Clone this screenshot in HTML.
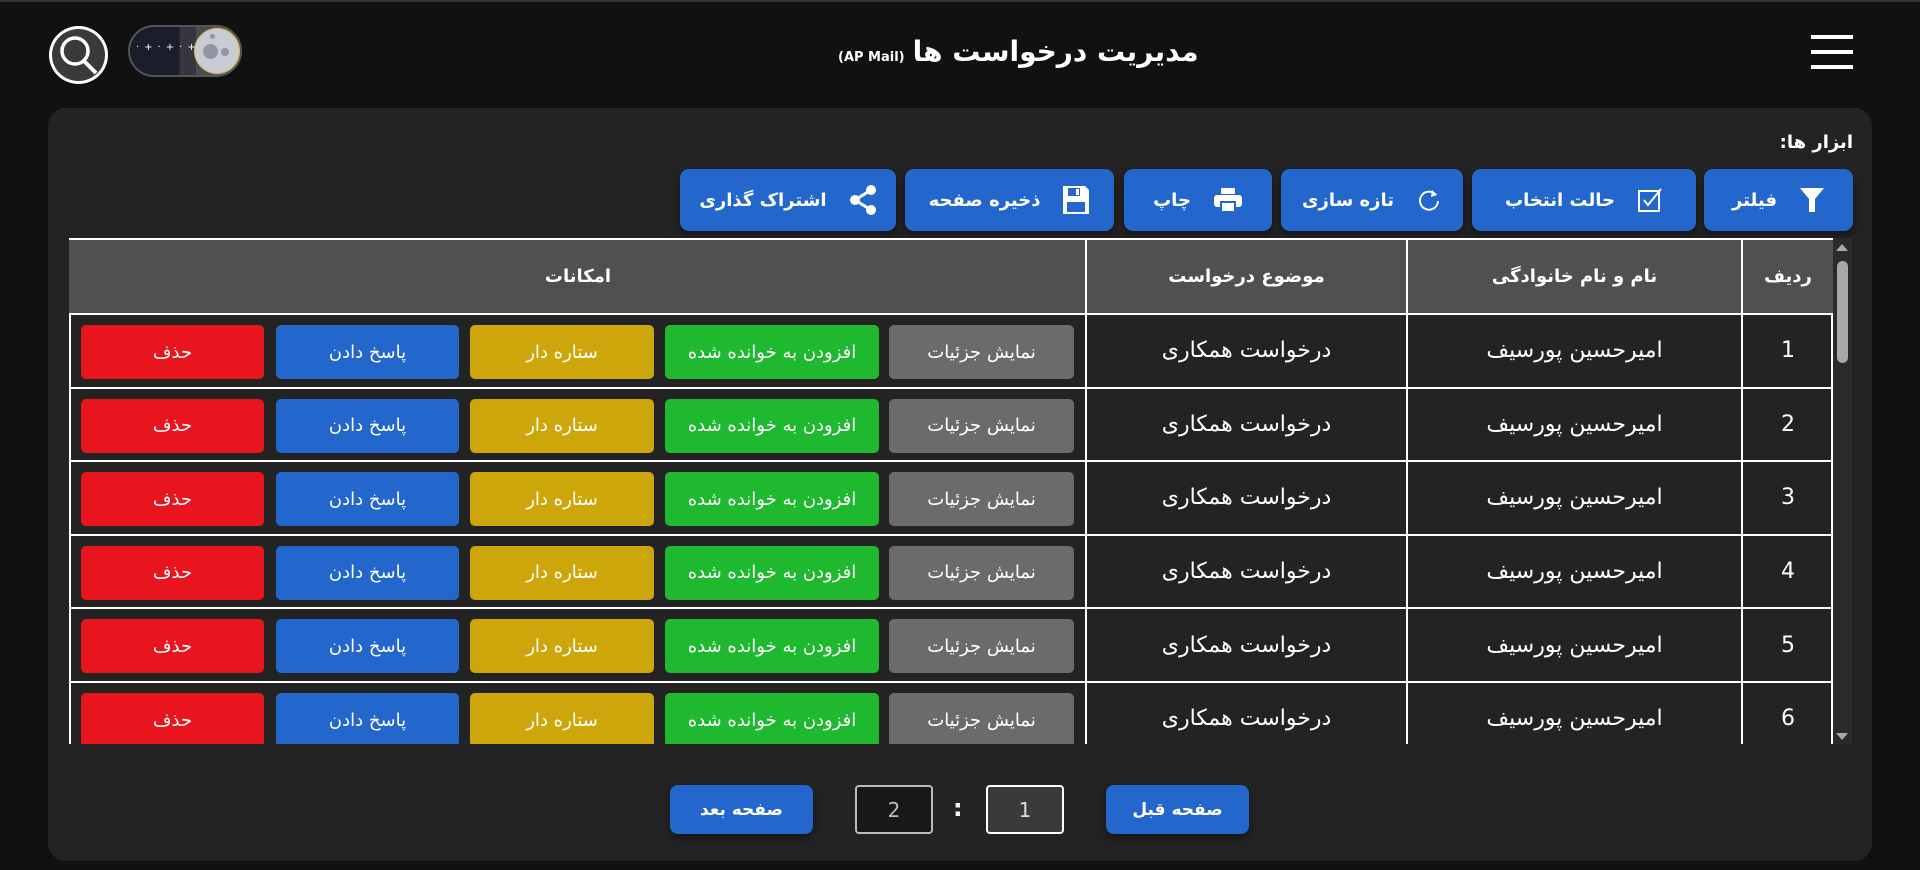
<!DOCTYPE html>
<html><head><meta charset="utf-8"><style>
*{box-sizing:border-box;margin:0;padding:0}
html,body{width:1920px;height:870px;overflow:hidden}
body{background:#111;font-family:"DejaVu Sans","Liberation Sans",sans-serif;color:#fff;position:relative;direction:rtl}
.a{position:absolute}
.tb{position:absolute;top:169px;height:62px;background:#2366cc;border-radius:9px;display:flex;align-items:center;justify-content:center;gap:22px;font-weight:bold;font-size:18px;box-shadow:0 4px 8px rgba(0,0,0,.4)}
.row{position:absolute;left:69px;width:1764px;height:73.5px;border-bottom:2px solid #fff}
.c{position:absolute;top:0;height:100%;display:flex;align-items:center;justify-content:center;border-left:2px solid #fff}
.b{position:absolute;top:10px;height:54px;border-radius:5px;display:flex;align-items:center;justify-content:center;font-size:18px}
</style></head><body>
<div class="a" style="left:0;top:0;width:1920px;height:2px;background:#333"></div>
<div class="a" style="left:49px;top:26px;width:59px;height:58px;border:3px solid #fff;border-radius:50%;background:#3a3a3a"></div>
<svg class="a" style="left:49px;top:26px" width="59" height="58" viewBox="0 0 59 58"><circle cx="26" cy="25" r="13" fill="none" stroke="#fff" stroke-width="3.5"/><line x1="35" y1="35" x2="47" y2="47" stroke="#fff" stroke-width="4"/></svg>
<div class="a" style="left:128px;top:25px;width:114px;height:52px;border-radius:26px;background:linear-gradient(90deg,#1c1d2a 0 45%,#35363f 45% 60%,#4a4b54 60% 75%,#5e5f68 75%);border:2px solid #555;overflow:hidden"></div>
<div class="a" style="left:194px;top:28px;width:46px;height:46px;border-radius:50%;background:#c9ccd4;border:1px solid #d8b84a"></div>
<div class="a" style="left:203px;top:44px;width:15px;height:15px;border-radius:50%;background:#9096a6"></div>
<div class="a" style="left:221px;top:48px;width:8px;height:8px;border-radius:50%;background:#9096a6"></div>
<div class="a" style="left:210px;top:34px;width:5px;height:5px;border-radius:50%;background:#9096a6"></div>
<div class="a" style="left:136px;top:42px;color:#fff;font-size:10px;letter-spacing:5px;direction:ltr">·+·+·+</div>
<div class="a" style="left:838px;top:35px;direction:ltr;display:flex;align-items:baseline;gap:8px;white-space:nowrap"><span style="font-size:13px;font-weight:bold">(AP Mail)</span><span style="font-size:28px;font-weight:bold;direction:rtl">مدیریت درخواست ها</span></div>
<div class="a" style="left:1811px;top:35px;width:42px;height:4px;background:#fff"></div>
<div class="a" style="left:1811px;top:50px;width:42px;height:4px;background:#fff"></div>
<div class="a" style="left:1811px;top:65px;width:42px;height:4px;background:#fff"></div>
<div class="a" style="left:48px;top:108px;width:1824px;height:753px;background:#232323;border-radius:18px"></div>
<div class="a" style="right:67px;top:132px;font-size:18px;font-weight:bold">ابزار ها:</div>
<div class="tb" style="left:1704px;width:149px"><svg width="26" height="28" viewBox="0 0 26 28"><path d="M1 2h24l-9 11v13h-6V13z" fill="#fff"/></svg><span>فیلتر</span></div>
<div class="tb" style="left:1472px;width:224px"><svg width="26" height="26" viewBox="0 0 26 26"><rect x="2" y="4" width="20" height="20" fill="none" stroke="#fff" stroke-width="2"/><path d="M7 13l4 5 13-16" fill="none" stroke="#fff" stroke-width="2"/></svg><span>حالت انتخاب</span></div>
<div class="tb" style="left:1281px;width:182px"><svg width="26" height="26" viewBox="0 0 26 26"><path d="M20 8A9 9 0 1 0 22 14" fill="none" stroke="#fff" stroke-width="2"/><path d="M16 3l5 5-6 2z" fill="#fff"/></svg><span>تازه سازی</span></div>
<div class="tb" style="left:1124px;width:148px"><svg width="30" height="26" viewBox="0 0 30 26"><rect x="8" y="1" width="14" height="6" rx="1" fill="#fff"/><rect x="1" y="8" width="28" height="12" rx="3" fill="#fff"/><rect x="8" y="15" width="14" height="10" fill="#fff" stroke="#2366cc" stroke-width="2"/></svg><span>چاپ</span></div>
<div class="tb" style="left:905px;width:209px"><svg width="28" height="30" viewBox="0 0 28 30"><path d="M1 1h22l4 4v24H1z" fill="#fff"/><rect x="6" y="3" width="12" height="8" fill="#2366cc"/><rect x="14" y="4" width="3" height="6" fill="#fff"/><rect x="5" y="17" width="18" height="10" fill="#2366cc"/></svg><span>ذخیره صفحه</span></div>
<div class="tb" style="left:680px;width:216px"><svg width="28" height="30" viewBox="0 0 28 30"><circle cx="22" cy="5" r="5" fill="#fff"/><circle cx="6" cy="15" r="5" fill="#fff"/><circle cx="22" cy="25" r="5" fill="#fff"/><path d="M22 5L6 15l16 10" fill="none" stroke="#fff" stroke-width="3"/></svg><span>اشتراک گذاری</span></div>
<div class="a" style="left:0;top:238px;width:1920px;height:506px;overflow:hidden">
<div class="a" style="left:69px;top:0;width:1764px;height:506px;border:2px solid #fff;border-bottom:none"></div>
<div class="row" style="top:2px;height:75px;background:#505050;font-weight:bold;font-size:18px">
<div class="c" style="right:0;width:92px">ردیف</div>
<div class="c" style="right:92px;width:335px">نام و نام خانوادگی</div>
<div class="c" style="right:427px;width:321px">موضوع درخواست</div>
<div class="c" style="right:748px;width:1014px;border-left:none">امکانات</div>
</div>
<div id="rows"></div>
</div>
<div class="a" style="left:1833px;top:238px;width:19px;height:506px;background:#2b2b2b"></div>
<div class="a" style="left:1837px;top:261px;width:11px;height:102px;border-radius:6px;background:#a8a8a8"></div>
<div class="a" style="left:1836px;top:244px;width:0;height:0;border-left:6px solid transparent;border-right:6px solid transparent;border-bottom:7px solid #a8a8a8"></div>
<div class="a" style="left:1836px;top:733px;width:0;height:0;border-left:6px solid transparent;border-right:6px solid transparent;border-top:7px solid #a8a8a8"></div>
<div class="a" style="left:1106px;top:785px;width:143px;height:49px;background:#2366cc;border-radius:8px;display:flex;align-items:center;justify-content:center;font-weight:bold;font-size:17px;box-shadow:0 4px 8px rgba(0,0,0,.4)">صفحه قبل</div>
<div class="a" style="left:670px;top:785px;width:143px;height:49px;background:#2366cc;border-radius:8px;display:flex;align-items:center;justify-content:center;font-weight:bold;font-size:17px;box-shadow:0 4px 8px rgba(0,0,0,.4)">صفحه بعد</div>
<div class="a" style="left:986px;top:785px;width:78px;height:49px;background:#3a3a3a;border:2px solid #fff;border-radius:4px;display:flex;align-items:center;justify-content:center;font-size:20px;color:#ddd">1</div>
<div class="a" style="left:855px;top:785px;width:78px;height:49px;background:#181818;border:2px solid #bbb;border-radius:4px;display:flex;align-items:center;justify-content:center;font-size:20px;color:#bbb">2</div>
<div class="a" style="left:953px;top:794px;font-size:24px;font-weight:bold">:</div>
<script>
var h='';
for(var i=0;i<6;i++){var t=77+i*73.6;
h+='<div class="row" style="top:'+t+'px;font-size:22px">'+
'<div class="c" style="right:0;width:92px">'+(i+1)+'</div>'+
'<div class="c" style="right:92px;width:335px">امیرحسین پورسیف</div>'+
'<div class="c" style="right:427px;width:321px">درخواست همکاری</div>'+
'<div class="b" style="left:12px;width:183px;background:#e8141e">حذف</div>'+
'<div class="b" style="left:207px;width:183px;background:#2366cc">پاسخ دادن</div>'+
'<div class="b" style="left:401px;width:184px;background:#cca60a">ستاره دار</div>'+
'<div class="b" style="left:596px;width:214px;background:#1eb92e">افزودن به خوانده شده</div>'+
'<div class="b" style="left:820px;width:185px;background:#6b6b6b">نمایش جزئیات</div>'+
'</div>';}
document.getElementById('rows').innerHTML=h;
</script>
</body></html>
